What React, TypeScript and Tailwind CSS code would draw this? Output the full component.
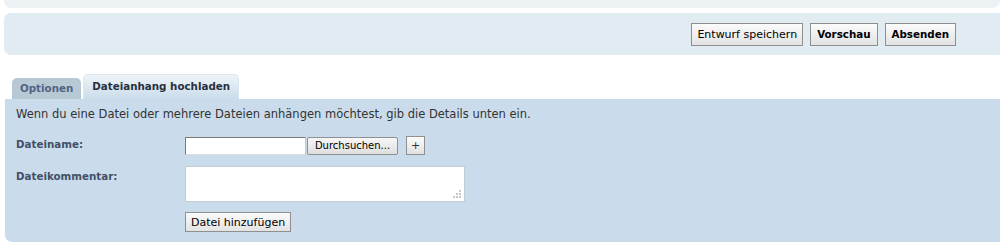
import React from "react";

const font = { fontFamily: '"DejaVu Sans", Verdana, sans-serif' };

function Btn({ children, bold }: { children: React.ReactNode; bold?: boolean }) {
  return (
    <button
      className={`h-[23px] border border-[#8f8f8f] bg-gradient-to-b from-[#fbfbfb] to-[#e3e3e3] leading-none text-black ${bold ? "px-[6px] font-bold text-[10.3px]" : "px-[5px] text-[11px]"}`}
    >
      {children}
    </button>
  );
}

export default function App() {
  return (
    <div className="w-[1000px] h-[244px] bg-white overflow-hidden text-[11px]" style={font}>
      <div className="ml-[4px] h-[8px] bg-[#ECF1F3] rounded-b-[7px]" />
      <div className="ml-[4px] mt-[5px] h-[42px] bg-[#E1EBF2] rounded-l-[7px] flex items-center justify-end pr-[44px] gap-[7px]">
        <Btn>Entwurf speichern</Btn>
        <Btn bold>Vorschau</Btn>
        <Btn bold>Absenden</Btn>
      </div>
      <div className="mt-[20px] ml-[12px] flex items-end gap-[2px] h-[24px]">
        <div className="h-[21px] px-[8px] bg-[#B8C9D6] rounded-t-[5px] flex items-center font-bold text-[10.3px] text-[#536482]">
          Optionen
        </div>
        <div className="h-[25px] px-[8px] bg-gradient-to-b from-[#EEF4F8] to-[#CADCEB] rounded-t-[5px] border-t border-x border-[#DCE6EE] flex items-center font-bold text-[10.3px] text-[#28313F]">
          Dateianhang hochladen
        </div>
      </div>
      <div className="ml-[5px] bg-[#CADCEB] rounded-bl-[7px] pt-[8px] pl-[11px] h-[143px]">
        <p className="text-[#333] text-[11.5px] leading-[14px]">
          Wenn du eine Datei oder mehrere Dateien anhängen möchtest, gib die Details unten ein.
        </p>
        <div className="mt-[15px] flex items-start">
          <div className="w-[169px] pt-[1px] font-bold text-[10.3px] text-[#425067]">Dateiname:</div>
          <div className="flex items-center">
            <div className="w-[121px] h-[18px] bg-white border border-[#7a7a7a] border-r-[#c9c9c9] border-b-[#dcdcdc]" />
            <button className="ml-[1px] h-[18px] w-[91px] border border-[#8f8f8f] rounded-[2px] bg-gradient-to-b from-[#f7f7f7] to-[#dedede] text-[10px] leading-none text-black">
              Durchsuchen...
            </button>
            <button className="ml-[8px] h-[19px] w-[19px] border border-[#8f8f8f] bg-gradient-to-b from-[#fbfbfb] to-[#e1e1e1] text-[11px] leading-none text-[#333]">
              +
            </button>
          </div>
        </div>
        <div className="mt-[11px] flex items-start">
          <div className="w-[169px] pt-[3px] font-bold text-[10.3px] text-[#425067]">Dateikommentar:</div>
          <div className="relative w-[280px] h-[36px] bg-white border border-[#c2ccd4]">
            <div className="absolute right-[3px] bottom-[3px] grid grid-cols-3 gap-[1px]">
              <span className="w-[2px] h-[2px]" />
              <span className="w-[2px] h-[2px]" />
              <span className="w-[2px] h-[2px] bg-[#c8c8c8]" />
              <span className="w-[2px] h-[2px]" />
              <span className="w-[2px] h-[2px] bg-[#c8c8c8]" />
              <span className="w-[2px] h-[2px] bg-[#c8c8c8]" />
              <span className="w-[2px] h-[2px] bg-[#c8c8c8]" />
              <span className="w-[2px] h-[2px] bg-[#c8c8c8]" />
              <span className="w-[2px] h-[2px] bg-[#c8c8c8]" />
            </div>
          </div>
        </div>
        <div className="mt-[10px] ml-[169px]">
          <button className="h-[20px] px-[5px] border border-[#8f8f8f] bg-gradient-to-b from-[#fbfbfb] to-[#e3e3e3] text-[11px] leading-none text-black">
            Datei hinzufügen
          </button>
        </div>
      </div>
    </div>
  );
}
